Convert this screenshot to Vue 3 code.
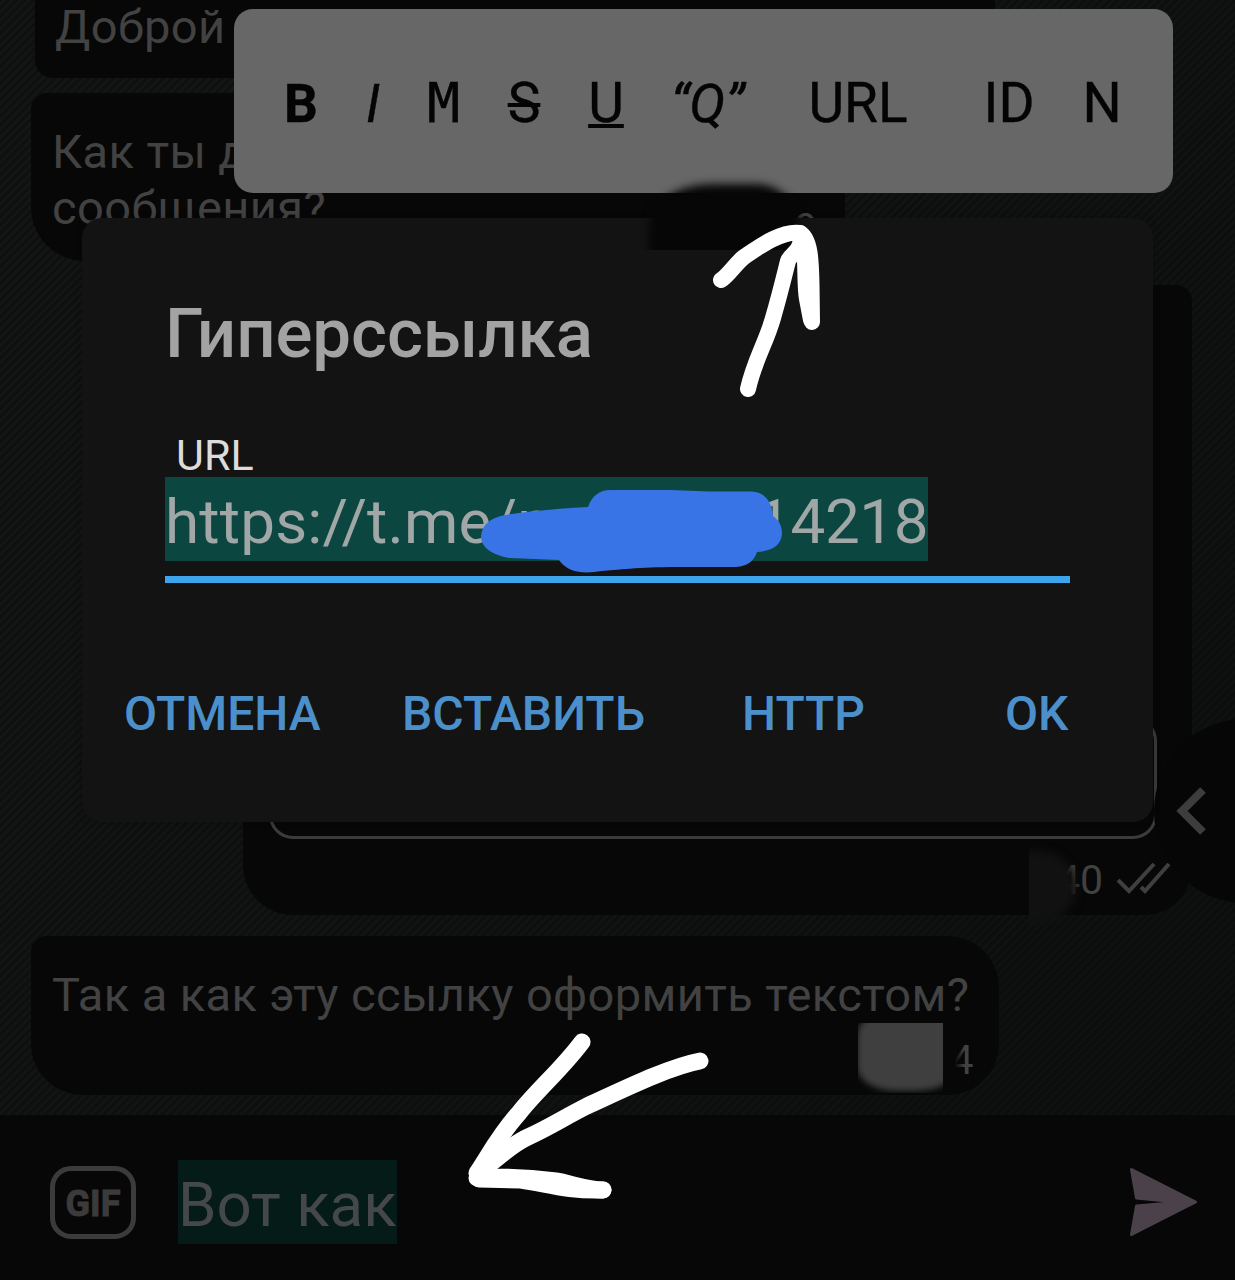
<script setup>
import { ref } from 'vue'

// Formatting popup items
const formats = ref([
  { label: 'B', style: 'bold' },
  { label: 'I', style: 'italic' },
  { label: 'M', style: 'mono' },
  { label: 'S', style: 'strike' },
  { label: 'U', style: 'underline' },
  { label: '“Q”', style: 'quote' },
  { label: 'URL', style: 'plain' },
  { label: 'ID', style: 'plain' },
  { label: 'N', style: 'plain' }
])

// Dialog buttons
const actions = ref(['ОТМЕНА', 'ВСТАВИТЬ', 'HTTP', 'OK'])
</script>

<template>
  <div class="screen">
    <main class="chat">
      <div class="bubble bubble-first">Доброй</div>
      <div class="bubble bubble-second">
        Как ты д<br />сообщения?
        <span class="time-second">9</span>
      </div>
      <div class="bubble-out">
        <div class="inline-button"></div>
        <div class="meta">
          <span class="meta-time">40</span>
          <svg class="checks" width="55" height="34" viewBox="0 0 55 34">
            <path d="M2 18 L13 29 L38 2 M25 25 L29 29 L53 2" />
          </svg>
        </div>
      </div>
      <div class="bubble bubble-third">
        <div class="third-text">Так а как эту ссылку оформить текстом?</div>
        <div class="third-meta">
          <span class="smudge-box"><span class="smudge-fill"></span></span>
          <span class="third-time">4</span>
        </div>
      </div>
    </main>

    <footer class="input-bar">
      <button class="gif">GIF</button>
      <span class="draft">Вот как</span>
      <svg class="send" width="70" height="70" viewBox="0 0 70 70">
        <path d="M3.500 2.500 L67.500 35 L3.500 67.500 L8.500 39 L52 35.300 L8.500 31 Z" />
      </svg>
    </footer>

    <div class="side-button">
      <svg width="34" height="50" viewBox="0 0 34 50">
        <path d="M29 4 L8 25 L29 46" />
      </svg>
    </div>

    <div class="toolbar">
      <span v-for="item in formats" :key="item.label" class="format" :class="item.style">{{ item.label }}</span>
    </div>

    <section class="dialog">
      <h1 class="title">Гиперссылка</h1>
      <div class="field">
        <label class="field-label">URL</label>
        <div class="field-value"><span class="url-start">https://t.me/n</span><span class="url-end">14218</span></div>
      </div>
      <div class="actions">
        <button v-for="action in actions" :key="action" class="action">{{ action }}</button>
      </div>
    </section>

    <!-- Hand-drawn marks over the screen -->
    <svg class="marks" width="1235" height="1280" viewBox="0 0 1235 1280">
      <defs>
        <filter id="soft" x="-20%" y="-20%" width="140%" height="140%" color-interpolation-filters="sRGB">
          <feGaussianBlur stdDeviation="4" />
        </filter>
        <clipPath id="smudgeClip"><rect x="630" y="160" width="200" height="90" /></clipPath>
        <clipPath id="timeClip"><rect x="1029" y="840" width="70" height="95" /></clipPath>
      </defs>
      <g clip-path="url(#smudgeClip)">
        <path class="smudge" d="M649 265 L649 228 C650 205 672 185 712 184 L758 184 C775 185 787 194 796 208 L800 235 L785 265 Z" />
      </g>
      <g clip-path="url(#timeClip)">
        <path class="smudge-time" d="M1015 851 H1042 C1062 853 1077 868 1077 887 C1077 908 1058 921 1040 923 H1015 Z" />
      </g>
      <path
        class="scribble"
        d="M481 536 C482 525 490 518 505 515 C530 511 565 508 588 507 C592 496 599 490 611 490 H670 L710 491.500 H752 C764 492 772 501 773 516 C780 521 782 527 782 534 C781 545 773 551 757 552 C754 561 748 566 736 567 H675 C640 567 615 570 602 571 C584 574 568 573 559 560 L510 558 C491 555 481 547 481 536 Z"
      />
      <g class="arrow">
        <path d="M721 280 C728 276 736 263 744 257 C756 249 781 230 800 233" />
        <path d="M800 233 C811 239 811 264 811.500 285 L812 322" />
        <path d="M802 235 C807 250 804 285 807 299 L811 320" />
        <path d="M748 389 C754 361 766 343 773 318 C780 294 784 277 788 261 C791 253 799 254 801 239" />
      </g>
      <g class="arrow arrow-wide">
        <path d="M582 1042 C562 1069 537 1090 519 1113 C500 1134 489 1155 477 1173" />
        <path d="M700 1061 C668 1067 618 1092 587 1106 C565 1117 550 1127 528 1137 C510 1145 492 1163 478 1174" />
        <path d="M477 1178 C509 1176 534 1178 556 1181 C569 1183 588 1190 603 1190" />
        <path d="M479 1179 L521 1180 C548 1184 567 1191 603 1190" />
      </g>
    </svg>
  </div>
</template>

<style>
body {
  background: #0d0f0f;
}
</style>

<style scoped>
.screen {
  position: relative;
  display: flex;
  flex-direction: column;
  width: 1235px;
  height: 1280px;
  overflow: hidden;
  font-family: Roboto, "Noto Sans", sans-serif;
  background:
    linear-gradient(125deg, rgba(5, 7, 7, 0) 20%, rgba(5, 7, 7, 0.4) 100%),
    repeating-linear-gradient(135deg, #0d0f0f 0, #151717 3px, #0d0f0f 5.9px);
}

button {
  padding: 0;
  border: 0;
  background: none;
  font-family: inherit;
}

/* Chat */
.chat {
  display: flex;
  flex-direction: column;
  align-items: flex-start;
  box-sizing: border-box;
  height: 1115px;
  padding-left: 31px;
}

.bubble {
  box-sizing: border-box;
  flex: none;
  background: #070707;
  color: #424242;
  font-size: 47px;
  line-height: 56px;
  letter-spacing: 0.39px;
}

.bubble-first {
  width: 960px;
  height: 110px;
  margin: -32px 0 15px 4px;
  padding: 31px 20px 0;
  border-radius: 18px;
}

.bubble-second {
  position: relative;
  width: 814px;
  height: 168px;
  margin-bottom: 24px;
  padding: 31px 21px 0;
  border-radius: 16px 16px 50px 54px;
}

.time-second {
  position: absolute;
  right: 27px;
  bottom: 9px;
  font-size: 41px;
  line-height: 48px;
}

.bubble-out {
  display: flex;
  flex: none;
  flex-direction: column;
  justify-content: flex-end;
  box-sizing: border-box;
  width: 949px;
  height: 630px;
  margin: 0 0 21px 212px;
  padding: 0 21px 12px 26px;
  border-radius: 16px 16px 48px 50px;
  background: #070707;
}

.inline-button {
  height: 116px;
  margin: 0 14px 16px 0;
  border: 3px solid #3b3b3b;
  border-radius: 24px;
}

.meta {
  display: flex;
  align-items: center;
  justify-content: flex-end;
  gap: 13px;
  height: 48px;
}

.meta-time {
  padding-top: 1px;
  color: #424242;
  font-size: 41px;
  line-height: 48px;
}

.checks path {
  fill: none;
  stroke: #3f3f3f;
  stroke-width: 4;
}

.bubble-third {
  width: 968px;
  height: 159px;
  padding: 31px 21px 0;
  border-radius: 16px 52px 52px 52px;
}

.third-text {
  white-space: nowrap;
}

.third-meta {
  display: flex;
  justify-content: flex-end;
  gap: 8px;
  height: 70px;
  padding-right: 4px;
}

.smudge-box {
  width: 85px;
  height: 70px;
  overflow: hidden;
}

.smudge-fill {
  display: block;
  width: 94px;
  height: 78px;
  margin: -10px 0 0 -1px;
  border-radius: 24px 0 40px 40px / 24px 0 14px 24px;
  background: #3f3f3f;
  filter: blur(3px);
}

.third-time {
  padding-top: 13px;
  font-size: 41px;
  line-height: 48px;
  mask-image: linear-gradient(90deg, transparent 15%, #000 60%);
}

/* Input bar */
.input-bar {
  display: flex;
  align-items: center;
  box-sizing: border-box;
  height: 165px;
  padding: 9px 37px 0 50px;
  background: #070707;
}

.gif {
  box-sizing: border-box;
  width: 86px;
  height: 73px;
  padding-top: 4px;
  border: 5px solid #3b3b3b;
  border-radius: 21px;
  color: #3b3b3b;
  font-size: 36px;
  font-weight: 700;
  line-height: 59px;
  -webkit-text-stroke: 1px #3b3b3b;
}

.draft {
  height: 84px;
  margin-left: 42px;
  background: #041b18;
  color: #45484a;
  font-size: 61.8px;
  line-height: 91px;
}

.send {
  margin-left: auto;
}

.send path {
  fill: #4b414b;
  stroke: #4b414b;
  stroke-width: 3;
  stroke-linejoin: round;
}

/* Round button sticking out of the right edge */
.side-button {
  position: absolute;
  top: 719px;
  left: 1154px;
  display: flex;
  align-items: center;
  box-sizing: border-box;
  width: 182px;
  height: 184px;
  padding-left: 20px;
  border-radius: 50%;
  background: #060606;
}

.side-button path {
  fill: none;
  stroke: #3d3d3d;
  stroke-width: 8;
}

/* Formatting popup */
.toolbar {
  position: absolute;
  top: 9px;
  left: 234px;
  display: grid;
  grid-template-columns: 72px 72px 69px 92px 72px 136px 160px 142px 44px;
  align-items: baseline;
  box-sizing: border-box;
  width: 939px;
  height: 184px;
  padding: 62px 0 0 31px;
  border-radius: 19px;
  background: #676767;
}

.format {
  color: #040404;
  font-size: 55px;
  line-height: 64px;
  text-align: center;
  white-space: nowrap;
  -webkit-text-stroke: 0.4px #040404;
}

.bold {
  font-size: 53px;
  font-weight: 700;
}

.italic {
  font-size: 53px;
  font-style: italic;
}

.mono {
  font-family: "DejaVu Sans Mono", monospace;
}

.strike {
  text-decoration: line-through;
  text-decoration-thickness: 4px;
}

.underline {
  text-decoration: underline;
  text-decoration-thickness: 4px;
}

.quote {
  margin-left: -5px;
  font-size: 54px;
  font-style: italic;
}

/* Link dialog */
.dialog {
  position: absolute;
  top: 218px;
  left: 82px;
  box-sizing: border-box;
  width: 1071px;
  height: 604px;
  padding: 76px 83px 0;
  border-radius: 20px;
  background: #131313;
  box-shadow: 0 0 8px rgba(0, 0, 0, 0.2);
}

.title {
  margin: 0 0 59px;
  color: #a3a3a3;
  font-size: 69px;
  font-weight: 500;
  line-height: 80px;
  letter-spacing: -0.1px;
}

.field {
  display: flex;
  flex-direction: column;
  align-items: flex-start;
  padding-bottom: 15px;
  border-bottom: 7px solid #3da5e9;
}

.field-label {
  padding-left: 11px;
  color: #dcdcdc;
  font-size: 43px;
  line-height: 44px;
}

.field-value {
  display: flex;
  justify-content: space-between;
  width: 763px;
  height: 84px;
  background: #0b4640;
  color: #a1a6a6;
  font-size: 62px;
  line-height: 90px;
}

.url-start {
  letter-spacing: 0.15px;
}

.url-end {
  letter-spacing: -0.5px;
}

.actions {
  display: grid;
  grid-template-columns: 278px 340px 263px auto;
  margin: 101px 0 0 -41px;
}

.action {
  color: #4b90cb;
  font-size: 48px;
  font-weight: 500;
  line-height: 60px;
  text-align: left;
}

.marks {
  position: absolute;
  top: 0;
  left: 0;
}

.smudge {
  fill: #060606;
  filter: url(#soft);
}

.smudge-time {
  fill: #111;
  filter: url(#soft);
}

.scribble {
  fill: #3874e6;
}

.arrow {
  fill: none;
  stroke: #fff;
  stroke-width: 16;
  stroke-linecap: round;
  stroke-linejoin: round;
}

.arrow-wide {
  stroke-width: 17;
}
</style>
